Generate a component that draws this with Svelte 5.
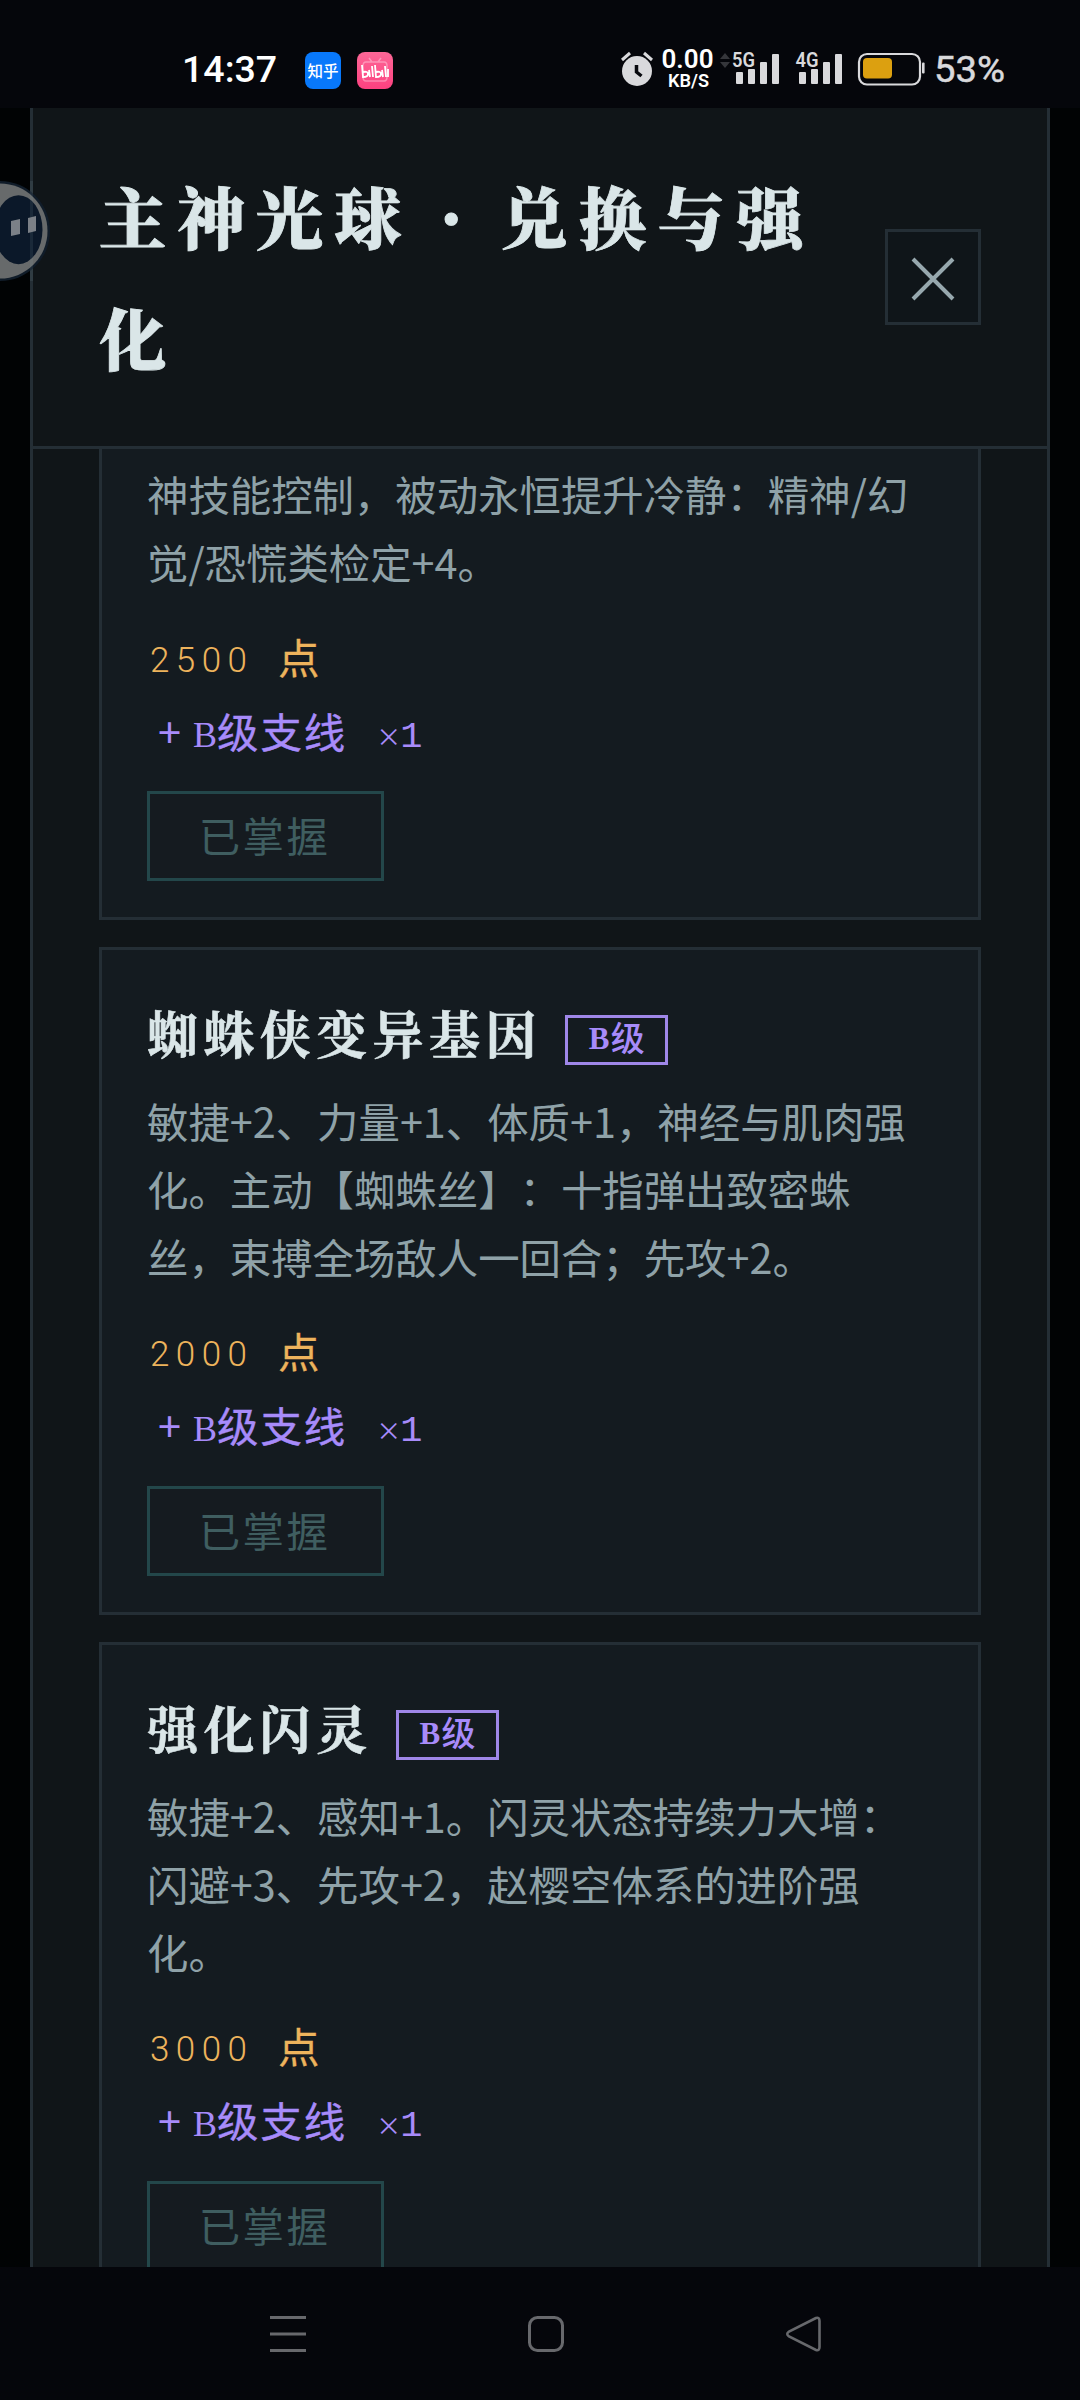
<script>
  const skills = [
    {
      name: '',
      grade: 'B级',
      lines: ['神技能控制，被动永恒提升冷静：精神/幻', '觉/恐慌类检定+4。'],
      price: '2500'
    },
    {
      name: '蜘蛛侠变异基因',
      grade: 'B级',
      lines: ['敏捷+2、力量+1、体质+1，神经与肌肉强', '化。主动【蜘蛛丝】：十指弹出致密蛛', '丝，束搏全场敌人一回合；先攻+2。'],
      price: '2000'
    },
    {
      name: '强化闪灵',
      grade: 'B级',
      lines: ['敏捷+2、感知+1。闪灵状态持续力大增：', '闪避+3、先攻+2，赵樱空体系的进阶强', '化。'],
      price: '3000'
    }
  ];
</script>

<div class="screen">
  <div class="status">
    <span class="clock">14:37</span>
    <span class="app zhihu">知乎</span>
    <span class="app bili">
      <svg width="36" height="37" viewBox="0 0 36 37" fill="none" stroke="#fff">
        <path d="M12 6l3 4M24 6l-3 4M9 10h18q3 0 3 4v11q0 4-3 4H9q-3 0-3-4V14q0-4 3-4z" stroke-width="1.5" opacity=".35" />
        <path d="M5 13l1 12q5 0 5-3t-5-2M12 18l1 7M15 14l1 11M18 13l1 12q5 0 5-3t-5-2M25 18l1 7M28 14l1 11M31 17v8" stroke-width="1.800" />
      </svg>
    </span>
    <svg class="indicators" width="400" height="60" viewBox="610 40 400 60">
      <g fill="#d9d9dc">
        <circle cx="637" cy="71" r="15" />
        <path d="M622 60l8-7M652 60l-8-7" stroke="#d9d9dc" stroke-width="3" />
        <path d="M636.500 65v7l5 4" fill="none" stroke="#08090e" stroke-width="3.500" />
        <path d="M720 59l5-6 5 6zM720 62l5 6 5-6z" fill="#35363b" />
        {#each [0, 63] as dx}
          <g transform="translate({dx} 0)">
            <rect x="736" y="72" width="7" height="12" rx="1" />
            <rect x="748" y="69" width="7" height="15" rx="1" />
            <rect x="760" y="62" width="7" height="22" rx="1" />
            <rect x="772" y="54" width="7" height="30" rx="1" />
          </g>
        {/each}
        <text x="732" y="67" class="net" textLength="23" lengthAdjust="spacingAndGlyphs">5G</text>
        <text x="795.500" y="67" class="net" textLength="23" lengthAdjust="spacingAndGlyphs">4G</text>
        <rect x="859" y="54" width="61" height="30.500" rx="8" fill="none" stroke="#d9d9dc" stroke-width="2.200" />
        <rect x="863" y="58" width="29" height="20.500" rx="4" fill="#dca010" />
        <rect x="922" y="62.500" width="2.600" height="11" rx="1" />
        <text x="934" y="81.500" class="pct" textLength="71" lengthAdjust="spacingAndGlyphs">53%</text>
        <text x="661.500" y="68" class="rate" fill="#fff" textLength="52" lengthAdjust="spacingAndGlyphs">0.00</text>
        <text x="668" y="86.500" class="unit" fill="#fff" textLength="41" lengthAdjust="spacingAndGlyphs">KB/S</text>
      </g>
    </svg>
  </div>

  <div class="stage">
    <section class="panel">
      <header>
        <h1>主神光球<i>·</i>兑换与强<br />化</h1>
        <button class="close" aria-label="关闭">
          <svg width="46" height="46" viewBox="0 0 46 46"><path d="M3 3l40 40M43 3L3 43" stroke="#97a8ae" stroke-width="4" /></svg>
        </button>
      </header>
      <div class="list">
        {#each skills as s}
          <article class:partial={!s.name}>
            {#if s.name}
              <div class="head">
                <h2>{s.name}</h2>
                <span class="tag"><b>B</b>级</span>
              </div>
            {/if}
            <p>{#each s.lines as line}<span>{line}</span>{/each}</p>
            <div class="price"><span class="num">{s.price}</span><span>点</span></div>
            <div class="side"><span class="plus">+</span><span class="b">B</span><span class="branch">级支线</span><span class="times">×</span><span class="one">1</span></div>
            <button class="owned">已掌握</button>
          </article>
        {/each}
      </div>
    </section>
    <svg class="bubble" width="54" height="110" viewBox="0 0 54 110">
      <circle cx="0" cy="55" r="50" fill="#101c29" />
      <circle cx="0" cy="55" r="47.500" fill="#676a6b" />
      <ellipse cx="18.500" cy="53.700" rx="24" ry="34.500" fill="#0b1829" />
      <rect x="30" y="5" width="3" height="100" fill="#8fa2b0" opacity=".12" />
      <path d="M11 45l9-2v15l-9 2zM28 42l8-2v15l-8 2z" fill="#7b8087" />
    </svg>
  </div>

  <nav>
    <svg width="1080" height="133" viewBox="0 2267 1080 133" fill="none" stroke="#67686c" stroke-width="3">
      <path d="M270 2317.500h36M270 2334h36M270 2350.500h36" />
      <rect x="529.500" y="2317.500" width="33" height="33" rx="8" />
      <path d="M816 2318L789 2331.500Q785.500 2334 789 2336.500L816 2350Q819.500 2351 819.500 2347V2321Q819.500 2317 816 2318z" stroke-width="2.600" />
    </svg>
  </nav>
</div>

<style>
  :global(body) { background: #05060b; }
  .screen {
    width: 1080px; height: 2400px; overflow: hidden;
    display: flex; flex-direction: column;
    background: #05060b; color: #8fa2a8;
    font-family: "Noto Sans CJK SC", "Noto Sans", sans-serif;
    text-spacing-trim: space-all;
  }
  .screen * { box-sizing: border-box; }
  .status { height: 108px; flex: none; display: flex; align-items: flex-start; padding: 52px 0 0 182px; }
  .clock { width: 123px; font: 500 37.5px/34px Roboto, sans-serif; color: #fff; white-space: nowrap; }
  .app { width: 36px; height: 37px; border-radius: 8px; display: flex; align-items: center; justify-content: center; overflow: hidden; margin-right: 16px; }
  .zhihu { background: #0878fb; color: #fff; font-size: 15.5px; font-weight: 500; line-height: 37px; white-space: nowrap; }
  .bili { background: linear-gradient(#fd6797, #fd4180); }
  .indicators { margin: -12px 0 0 201px; flex: none; }
  .indicators text { font-family: Roboto, sans-serif; }
  .net { font-size: 21px; font-weight: 600; }
  .pct { font-size: 37.5px; stroke: #d9d9dc; stroke-width: .5px; }
  .rate { font-size: 25px; font-weight: 600; }
  .unit { font-size: 17.5px; font-weight: 600; }

  .stage { position: relative; height: 2159px; flex: none; overflow: hidden; padding: 0 30px; background: #010304; }
  .panel { height: 100%; border: solid #242e35; border-width: 0 3px; background: #101518; display: flex; flex-direction: column; }
  header { height: 341px; flex: none; border-bottom: 3px solid #242e35; padding: 46px 66px; display: flex; align-items: center; justify-content: space-between; }
  h1 {
    margin: -4px 0 0; font: 900 67.5px/121.5px "Noto Serif CJK SC", "Noto Serif SC", "Noto Sans CJK SC", serif;
    letter-spacing: 10.9px; color: #dae6e8; white-space: nowrap; -webkit-text-stroke: .8px #dae6e8;
  }
  h1 i { display: inline-block; width: 88px; font-style: normal; letter-spacing: 0; text-align: center; text-indent: -11px; }
  .close { width: 96px; height: 96px; flex: none; padding: 4px 0 0; border: 3px solid #242e35; background: #0f1519; display: flex; align-items: center; justify-content: center; }

  .list { flex: 1; min-height: 0; overflow: hidden; padding: 0 66px; display: flex; flex-direction: column; gap: 27px; }
  article { flex: none; height: 668px; border: 3px solid #242e35; background: #141b20; padding: 36px 45px; display: flex; flex-direction: column; align-items: flex-start; }
  article.partial { height: 471px; border-top: 0; padding-top: 10px; }
  .head { height: 100px; display: flex; align-items: flex-start; gap: 23px; }
  h2 {
    margin: 0; font: 700 51px/92px "Noto Serif CJK SC", "Noto Serif SC", "Noto Sans CJK SC", serif;
    letter-spacing: 5.4px; color: #dae6e8; white-space: nowrap; -webkit-text-stroke: .6px #dae6e8;
  }
  .tag { width: 103px; height: 50px; margin-top: 29px; border: 3px solid #9f87e8; color: #a78bfa; font-size: 34px; font-weight: 500; line-height: 37px; padding-left: 21px; display: flex; align-items: flex-start; white-space: nowrap; }
  .tag b { width: 22px; font-family: "Liberation Serif", serif; font-size: 31px; position: relative; top: 2px; }
  p { margin: 0; font-size: 41.4px; line-height: 68.2px; }
  p span { display: block; white-space: nowrap; }
  .price { height: 74px; margin-top: 22px; display: flex; align-items: center; color: #edb35c; font-size: 41.4px; line-height: 60px; -webkit-text-stroke: .3px #edb35c; }
  .num { width: 131px; font-family: Roboto, sans-serif; font-weight: 300; font-size: 35px; letter-spacing: 6.4px; padding-left: 3px; position: relative; top: 5px; -webkit-text-stroke: 0; }
  .side { height: 74px; display: flex; align-items: center; color: #a78bfa; font-size: 41.4px; line-height: 60px; letter-spacing: 2px; padding-left: 11px; }
  .plus { width: 35px; }
  .b { width: 24px; font-family: "Liberation Serif", serif; font-size: 36px; position: relative; top: 5px; }
  .branch { -webkit-text-stroke: .4px #a78bfa; }
  .times { margin-left: 29px; width: 24px; font-size: 25px; position: relative; top: 5px; }
  .one { font-family: "Liberation Mono", monospace; font-size: 37px; position: relative; top: 7px; }
  .partial .price, .partial .side { position: relative; top: 1.5px; }
  .owned { margin-top: auto; width: 237px; height: 90px; flex: none; padding: 0 2px 0 0; border: 3px solid #23474a; background: #151b20; color: #3f5e60; font: 400 41.4px/60px "Noto Sans CJK SC", sans-serif; letter-spacing: 2.4px; padding-bottom: 4px; }
  .bubble { position: absolute; left: 0; top: 68px; }
  nav { height: 133px; flex: none; }
  nav svg { display: block; }
</style>
